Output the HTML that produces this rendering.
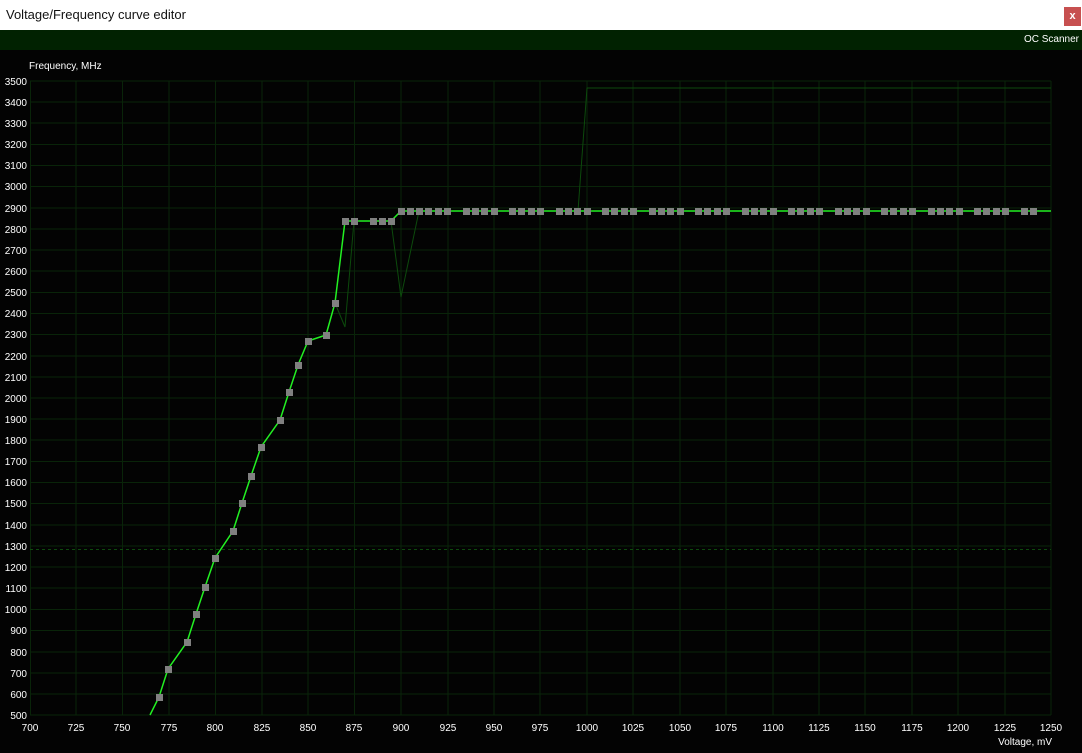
<!DOCTYPE html>
<html><head><meta charset="utf-8"><style>
html,body{margin:0;padding:0;width:1082px;height:753px;overflow:hidden;background:#030303;font-family:"Liberation Sans",sans-serif}
#title{position:absolute;left:0;top:0;width:1082px;height:30px;background:#fff;}
#title span{position:absolute;left:6px;top:7px;font-size:13px;color:#111}
#close{position:absolute;left:1064px;top:7px;width:17px;height:19px;background:#c75050;color:#fff;font-size:11px;font-weight:bold;text-align:center;line-height:18px}
#bar{position:absolute;left:0;top:30px;width:1082px;height:20px;background:#012201}
#bar span{position:absolute;right:3px;top:4px;font-size:10px;color:#fff}
svg{position:absolute;left:0;top:50px}
</style></head><body>
<div id="title"><span>Voltage/Frequency curve editor</span></div>
<div id="close">x</div>
<div id="bar"><span>OC Scanner</span></div>
<svg width="1082" height="703" viewBox="0 50 1082 703" font-family="Liberation Sans, sans-serif" font-size="10" fill="#fff">
<rect x="0" y="50" width="1082" height="703" fill="#030303"/>
<text x="29" y="69" font-size="10">Frequency, MHz</text>
<g stroke="#092409" stroke-width="1">
<path d="M30 715H1051M30 694H1051M30 673H1051M30 652H1051M30 630.5H1051M30 609.5H1051M30 588H1051M30 567H1051M30 546H1051M30 525H1051M30 503.5H1051M30 482.5H1051M30 461.5H1051M30 440H1051M30 419H1051M30 398H1051M30 377H1051M30 356H1051M30 334.5H1051M30 313.5H1051M30 292.5H1051M30 271H1051M30 250H1051M30 229H1051M30 208H1051M30 186.5H1051M30 165.5H1051M30 144.5H1051M30 123H1051M30 102H1051M30 81H1051"/>
<path d="M30.5 81V715M76 81V715M122.5 81V715M169 81V715M215.5 81V715M262 81V715M308 81V715M354.5 81V715M401 81V715M448 81V715M494 81V715M540 81V715M587 81V715M633 81V715M680 81V715M726 81V715M773 81V715M819 81V715M865 81V715M912 81V715M958 81V715M1005 81V715M1051 81V715"/>
</g>
<path d="M30 549.5H1051" stroke="#0e4a0e" stroke-dasharray="3,3"/>
<g text-anchor="end" font-size="10">
<text x="27" y="719">500</text><text x="27" y="698">600</text><text x="27" y="677">700</text><text x="27" y="656">800</text><text x="27" y="634">900</text><text x="27" y="613">1000</text><text x="27" y="592">1100</text><text x="27" y="571">1200</text><text x="27" y="550">1300</text><text x="27" y="529">1400</text><text x="27" y="507">1500</text><text x="27" y="486">1600</text><text x="27" y="465">1700</text><text x="27" y="444">1800</text><text x="27" y="423">1900</text><text x="27" y="402">2000</text><text x="27" y="381">2100</text><text x="27" y="360">2200</text><text x="27" y="338">2300</text><text x="27" y="317">2400</text><text x="27" y="296">2500</text><text x="27" y="275">2600</text><text x="27" y="254">2700</text><text x="27" y="233">2800</text><text x="27" y="212">2900</text><text x="27" y="190">3000</text><text x="27" y="169">3100</text><text x="27" y="148">3200</text><text x="27" y="127">3300</text><text x="27" y="106">3400</text><text x="27" y="85">3500</text>
</g>
<g text-anchor="middle" font-size="10">
<text x="30" y="731">700</text><text x="76" y="731">725</text><text x="122" y="731">750</text><text x="169" y="731">775</text><text x="215" y="731">800</text><text x="262" y="731">825</text><text x="308" y="731">850</text><text x="354" y="731">875</text><text x="401" y="731">900</text><text x="448" y="731">925</text><text x="494" y="731">950</text><text x="540" y="731">975</text><text x="587" y="731">1000</text><text x="633" y="731">1025</text><text x="680" y="731">1050</text><text x="726" y="731">1075</text><text x="773" y="731">1100</text><text x="819" y="731">1125</text><text x="865" y="731">1150</text><text x="912" y="731">1175</text><text x="958" y="731">1200</text><text x="1005" y="731">1225</text><text x="1051" y="731">1250</text>
</g>
<text x="1052" y="745" text-anchor="end" font-size="10">Voltage, mV</text>
<polyline fill="none" stroke="#0c4a0c" stroke-width="1" points="335,303 345,327 354,221 391,221 401,297 419,211 578,211 587,88 1051,88"/>
<polyline fill="none" stroke="#22f022" stroke-width="1.5" points="150,715 159,697 168,669 187,642 196,614 205,587 215,558 233,531 242,503 251,476 261,447 280,420 289,392 298,365 308,341 326,335 335,303 345,221 354,221 391,221 401,211 1051,211"/>
<g fill="#808080">
<rect x="156" y="694" width="7" height="7"/><rect x="165" y="666" width="7" height="7"/><rect x="184" y="639" width="7" height="7"/><rect x="193" y="611" width="7" height="7"/><rect x="202" y="584" width="7" height="7"/><rect x="212" y="555" width="7" height="7"/><rect x="230" y="528" width="7" height="7"/><rect x="239" y="500" width="7" height="7"/><rect x="248" y="473" width="7" height="7"/><rect x="258" y="444" width="7" height="7"/><rect x="277" y="417" width="7" height="7"/><rect x="286" y="389" width="7" height="7"/><rect x="295" y="362" width="7" height="7"/><rect x="305" y="338" width="7" height="7"/><rect x="323" y="332" width="7" height="7"/><rect x="332" y="300" width="7" height="7"/>
<rect x="342" y="218" width="7" height="7"/><rect x="351" y="218" width="7" height="7"/><rect x="370" y="218" width="7" height="7"/><rect x="379" y="218" width="7" height="7"/><rect x="388" y="218" width="7" height="7"/>
<g transform="translate(0,208)">
<rect x="398" width="7" height="7"/><rect x="407" width="7" height="7"/><rect x="416" width="7" height="7"/><rect x="425" width="7" height="7"/><rect x="435" width="7" height="7"/><rect x="444" width="7" height="7"/>
<rect x="463" width="7" height="7"/><rect x="472" width="7" height="7"/><rect x="481" width="7" height="7"/><rect x="491" width="7" height="7"/>
<rect x="509" width="7" height="7"/><rect x="518" width="7" height="7"/><rect x="528" width="7" height="7"/><rect x="537" width="7" height="7"/>
<rect x="556" width="7" height="7"/><rect x="565" width="7" height="7"/><rect x="574" width="7" height="7"/><rect x="584" width="7" height="7"/>
<rect x="602" width="7" height="7"/><rect x="611" width="7" height="7"/><rect x="621" width="7" height="7"/><rect x="630" width="7" height="7"/>
<rect x="649" width="7" height="7"/><rect x="658" width="7" height="7"/><rect x="667" width="7" height="7"/><rect x="677" width="7" height="7"/>
<rect x="695" width="7" height="7"/><rect x="704" width="7" height="7"/><rect x="714" width="7" height="7"/><rect x="723" width="7" height="7"/>
<rect x="742" width="7" height="7"/><rect x="751" width="7" height="7"/><rect x="760" width="7" height="7"/><rect x="770" width="7" height="7"/>
<rect x="788" width="7" height="7"/><rect x="797" width="7" height="7"/><rect x="807" width="7" height="7"/><rect x="816" width="7" height="7"/>
<rect x="835" width="7" height="7"/><rect x="844" width="7" height="7"/><rect x="853" width="7" height="7"/><rect x="863" width="7" height="7"/>
<rect x="881" width="7" height="7"/><rect x="890" width="7" height="7"/><rect x="900" width="7" height="7"/><rect x="909" width="7" height="7"/>
<rect x="928" width="7" height="7"/><rect x="937" width="7" height="7"/><rect x="946" width="7" height="7"/><rect x="956" width="7" height="7"/>
<rect x="974" width="7" height="7"/><rect x="983" width="7" height="7"/><rect x="993" width="7" height="7"/><rect x="1002" width="7" height="7"/>
<rect x="1021" width="7" height="7"/><rect x="1030" width="7" height="7"/>
</g>
</g>
</svg>
</body></html>
